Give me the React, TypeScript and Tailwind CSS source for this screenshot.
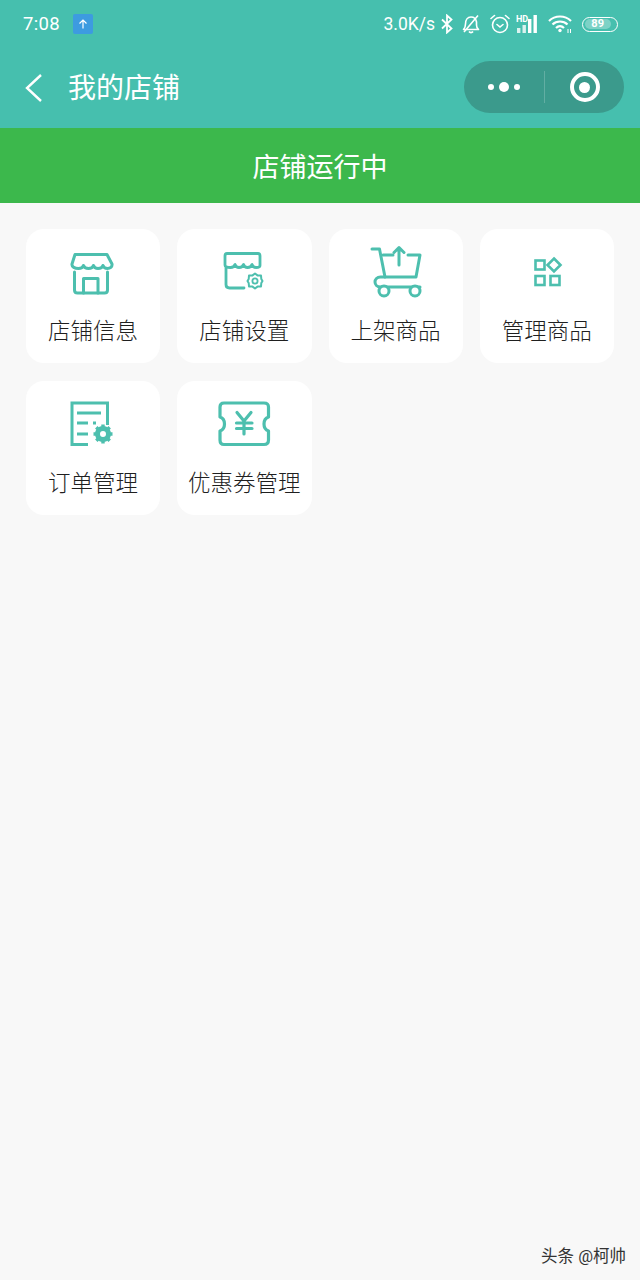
const TEAL = '#4DBFAE';

function ShopIcon() {
  return (
    <svg width="60" height="60" viewBox="0 0 60 60" fill="none" stroke={TEAL} strokeWidth="3" strokeLinecap="round" strokeLinejoin="round">
      <path d="M12 11.5H44L49 21C49.5 24 47 25.5 44.5 25.5C42 25.5 40.5 24 40 22.5C39.5 24 37.5 25.5 35 25.5C32.5 25.5 31 24 30.5 22.5C30 24 28 25.5 25.5 25.5C23 25.5 21 24 20.5 22.5C20 24 18 25.5 15.5 25.5C12 25.5 8.5 24 9 21Z" />
      <path d="M11.5 29V47C11.5 49 12.5 50 14.5 50H41.5C43.5 50 44.5 49 44.5 47V29" />
      <path d="M20.5 50V35.5H35V50" />
    </svg>
  );
}

function ShopSettingIcon() {
  return (
    <svg width="60" height="60" viewBox="0 0 60 60" fill="none" stroke={TEAL} strokeLinecap="round" strokeLinejoin="round">
      <path strokeWidth="2.8" d="M13 10.5H44C45.5 10.5 46 11.5 46 13V22.5C46 24 44 24.5 42 24.5C40 24.5 38.5 23 38 21.5C37.5 23 35.5 24.5 33.5 24.5C31.5 24.5 30 23 29.5 21.5C29 23 27 24.5 25 24.5C23 24.5 21.5 23 21 21.5C20.5 23 18.5 24.5 16.5 24.5C14 24.5 11 24 11 22V13C11 11.5 11.5 10.5 13 10.5Z" />
      <path strokeWidth="2.8" d="M12 25V41.5C12 44 13.5 45 15.5 45H30" />
      <path strokeWidth="2" d="M41 30.5L43.5 32.4L47 32.6L47.3 36L48.5 38L47.3 40L47 43.4L43.5 43.6L41 45.5L38.5 43.6L35 43.4L34.7 40L33.5 38L34.7 36L35 32.6L38.5 32.4Z" />
      <circle cx="41" cy="38" r="2.6" strokeWidth="1.8" />
    </svg>
  );
}

function CartIcon() {
  return (
    <svg width="60" height="60" viewBox="0 0 60 60" fill="none" stroke={TEAL} strokeWidth="3" strokeLinecap="round" strokeLinejoin="round">
      <path d="M6 6H13.5L19 34" />
      <path d="M17 12H27M42 12H54L50 34H14.5C11 34 9 36.5 9 39C9 41.5 11 44 14.5 44H54" />
      <path d="M33 22V4.5M28 9.5L33 4.5L38 9.5" />
      <circle cx="18" cy="48" r="5" fill="#fff" />
      <circle cx="49" cy="48" r="5" fill="#fff" />
    </svg>
  );
}

function GoodsIcon() {
  return (
    <svg width="60" height="60" viewBox="0 0 60 60" fill="none" stroke={TEAL} strokeWidth="2.6">
      <rect x="18.5" y="17.5" width="9" height="9" />
      <rect x="18.5" y="33" width="9" height="9" />
      <rect x="33.5" y="33" width="9" height="9" />
      <path d="M37 15.5L43.5 22L37 28.5L30.5 22Z" />
    </svg>
  );
}

function OrderIcon() {
  return (
    <svg width="60" height="60" viewBox="0 0 60 60" fill="none">
      <path stroke={TEAL} strokeWidth="3" d="M25 49.5H9V8H44.5V30" />
      <path stroke={TEAL} strokeWidth="2.8" d="M14 18H38M14 28H25M30 28H33M14 39H25" />
      <circle cx="40" cy="39" r="5.5" stroke={TEAL} strokeWidth="5" />
      <path stroke={TEAL} strokeWidth="3.4" d="M40 29.5V32M40 46V48.5M30.5 39H33M47 39H49.5M33.3 32.3L35 34M45 44L46.7 45.7M33.3 45.7L35 44M45 34L46.7 32.3" />
    </svg>
  );
}

function CouponIcon() {
  return (
    <svg width="60" height="60" viewBox="0 0 60 60" fill="none" stroke={TEAL} strokeWidth="3.2" strokeLinecap="round" strokeLinejoin="round">
      <path d="M10 8H50C53 8 54.5 9.5 54.5 12V22C51.5 23 50 25.5 50 29C50 32.5 51.5 35 54.5 36V45C54.5 48 53 49.5 50 49.5H10C7.5 49.5 6 48 6 45V36C9 35 10.5 32.5 10.5 29C10.5 25.5 9 23 6 22V12C6 9.5 7.5 8 10 8Z" />
      <path d="M23 17.5L30 26L37 17.5M22.5 28H38M22.5 33.5H38M30 26V39" />
    </svg>
  );
}

function StatusIcons() {
  return (
    <div className="flex items-center">
      <svg width="12" height="20" viewBox="0 0 12 20" fill="none" stroke="#fff" strokeWidth="1.8" className="ml-[6px]">
        <path d="M1 5.5L10.5 14.5L6 18.5V1.5L10.5 5.5L1 14.5" />
      </svg>
      <svg width="20" height="20" viewBox="0 0 20 20" fill="none" stroke="#fff" strokeWidth="1.6" strokeLinejoin="round" className="ml-[8px]">
        <path d="M2.5 15.5C4 14 4.5 12.5 4.5 10C4.5 6 6.5 3 10 3C13 3 15 5 15.5 8V11C15.5 13 16 14.5 17.5 15.5Z" />
        <path d="M8 17.5C9 19 11 19 12 17.5M3 18L17 1.5" />
      </svg>
      <svg width="20" height="20" viewBox="0 0 20 20" fill="none" stroke="#fff" strokeWidth="1.6" strokeLinecap="round" className="ml-[9px]">
        <circle cx="10" cy="11" r="7.5" />
        <path d="M7 10.5L10 13L13 10.5M1 4.5L4.5 1.5M19 4.5L15.5 1.5" />
      </svg>
      <svg width="24" height="20" viewBox="0 0 24 20" fill="#fff" className="ml-[6px]">
        <rect x="1" y="14" width="3.4" height="5" opacity="0.8" />
        <rect x="6.5" y="11" width="3.4" height="8" opacity="0.8" />
        <rect x="12" y="5" width="3.4" height="14" />
        <rect x="17.5" y="1" width="3.4" height="18" />
        <text x="0" y="8" fontSize="9" fontWeight="700" fontFamily="Roboto, sans-serif">HD</text>
      </svg>
      <svg width="25" height="20" viewBox="0 0 25 20" fill="none" stroke="#fff" strokeWidth="2.2" className="ml-[8px]">
        <path d="M1 7C7 1 17 1 23 7M4.5 10.5C8.5 6.5 15.5 6.5 19.5 10.5M8 14C10.5 11.5 13.5 11.5 16 14" />
        <circle cx="12" cy="16.5" r="1.7" fill="#fff" stroke="none" />
        <path strokeWidth="1" d="M20 15V19M22.5 15V19" />
      </svg>
      <div className="ml-[9px] flex h-[15px] w-[36px] items-center rounded-full border border-white p-[1.5px]">
        <div className="flex h-full w-[85%] items-center justify-center rounded-full bg-white/30 text-[11px] font-bold text-white">89</div>
      </div>
    </div>
  );
}

function Tile({ icon, label }: { icon: React.ReactNode; label: string }) {
  return (
    <div className="flex h-[134px] flex-col items-center rounded-[18px] bg-white pt-[14px]">
      {icon}
      <span className="mt-[11px] whitespace-nowrap text-[22.5px] font-light leading-[34px] text-[#1f1f1f]">{label}</span>
    </div>
  );
}

export default function App() {
  const tiles = [
    { icon: <ShopIcon />, label: '店铺信息' },
    { icon: <ShopSettingIcon />, label: '店铺设置' },
    { icon: <CartIcon />, label: '上架商品' },
    { icon: <GoodsIcon />, label: '管理商品' },
    { icon: <OrderIcon />, label: '订单管理' },
    { icon: <CouponIcon />, label: '优惠券管理' },
  ];

  return (
    <div className="relative h-[1280px] w-[640px] overflow-hidden bg-[#f8f8f8] font-['Roboto','Noto_Sans_CJK_SC',sans-serif]">
      {/* status bar */}
      <div className="flex h-[128px] flex-col bg-[#46bfae]">
        <div className="flex h-[48px] items-center justify-between pl-[23px] pr-[22px] text-white">
          <div className="flex items-center">
            <span className="mt-[2px] text-[18.5px] tracking-[0.3px]">7:08</span>
            <div className="ml-[13px] flex h-[20px] w-[20px] items-center justify-center rounded-[2px] bg-[#3d9be0]">
              <svg width="12" height="12" viewBox="0 0 12 12" fill="none" stroke="#fff" strokeWidth="1.2">
                <path d="M6 10.5V2M2.5 5.5L6 2L9.5 5.5" />
              </svg>
            </div>
          </div>
          <div className="flex items-center">
            <span className="mt-[1px] text-[17.5px]">3.0K/s</span>
            <StatusIcons />
          </div>
        </div>

        {/* nav bar */}
        <div className="flex h-[80px] items-center pb-[2px] pl-[25px] pr-[16px]">
          <svg width="18" height="30" viewBox="0 0 18 30" fill="none" stroke="#fff" strokeWidth="2.4" className="mt-[2px]">
            <path d="M16 2L2 15L16 28" />
          </svg>
          <span className="ml-[25px] mt-[4px] text-[28px] leading-none text-white">我的店铺</span>
          <div className="ml-auto flex h-[52px] w-[160px] items-center rounded-full bg-[#3b9a8c]">
            <div className="flex w-[80px] items-center justify-center gap-[5px]">
              <span className="h-[6px] w-[6px] rounded-full bg-white" />
              <span className="h-[10px] w-[10px] rounded-full bg-white" />
              <span className="h-[6px] w-[6px] rounded-full bg-white" />
            </div>
            <div className="h-[32px] w-px bg-white/20" />
            <div className="flex flex-1 items-center justify-center">
              <div className="flex h-[30px] w-[30px] items-center justify-center rounded-full border-[4px] border-white">
                <span className="h-[11px] w-[11px] rounded-full bg-white" />
              </div>
            </div>
          </div>
        </div>
      </div>

      <div className="flex h-[75px] items-center justify-center bg-[#3cb84c] pt-[5px] text-[27px] text-white">店铺运行中</div>

      <div className="grid grid-cols-4 gap-x-[17px] gap-y-[18px] px-[26px] pt-[26px]">
        {tiles.map((t) => (
          <Tile key={t.label} icon={t.icon} label={t.label} />
        ))}
      </div>

      {/* watermark */}
      <span className="absolute bottom-[13px] right-[14px] text-[16.5px] leading-[20px] text-[#333]">头条 @柯帅</span>
    </div>
  );
}
